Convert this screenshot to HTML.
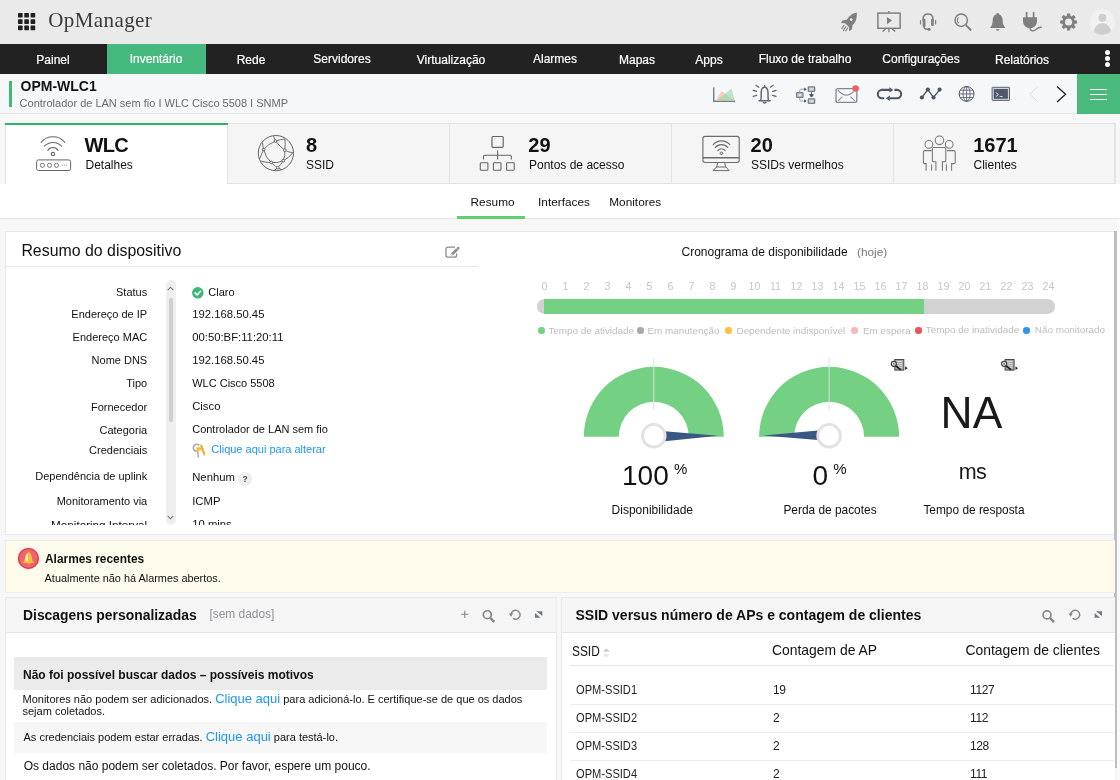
<!DOCTYPE html>
<html>
<head>
<meta charset="utf-8">
<title>OpManager</title>
<style>
*{box-sizing:border-box;margin:0;padding:0}
html,body{width:1120px;height:780px;overflow:hidden;background:#f7f7f7;font-family:"Liberation Sans",sans-serif;color:#000}
#w{position:absolute;left:0;top:0;width:1120px;height:780px;will-change:transform}
.a{position:absolute}
.t{position:absolute;white-space:nowrap;line-height:1}
svg{overflow:visible}
</style>
</head>
<body>
<div id="w">
<div class="a" style="left:0px;top:0px;width:1120px;height:44px;background:#eaeaea;"></div>
<svg class="a" style="left:17.5px;top:13.3px;" width="18" height="18" viewBox="0 0 18 18"><g fill="#1f1f1f"><rect x="0.0" y="0.0" width="4.6" height="4.6" rx="0.6"/><rect x="6.3" y="0.0" width="4.6" height="4.6" rx="0.6"/><rect x="12.6" y="0.0" width="4.6" height="4.6" rx="0.6"/><rect x="0.0" y="6.3" width="4.6" height="4.6" rx="0.6"/><rect x="6.3" y="6.3" width="4.6" height="4.6" rx="0.6"/><rect x="12.6" y="6.3" width="4.6" height="4.6" rx="0.6"/><rect x="0.0" y="12.6" width="4.6" height="4.6" rx="0.6"/><rect x="6.3" y="12.6" width="4.6" height="4.6" rx="0.6"/><rect x="12.6" y="12.6" width="4.6" height="4.6" rx="0.6"/></g></svg>
<div class="t" style="top:10px;font-size:21px;color:#3a3a3a;font-family:&quot;Liberation Serif&quot;,serif;letter-spacing:0.42px;left:48.2px;">OpManager</div>
<div class="a" style="left:0px;top:44px;width:1120px;height:30px;background:#222222;"></div>
<div class="a" style="left:107px;top:44px;width:99px;height:30px;background:#46ba7e;"></div>
<div class="t" style="top:54px;font-size:12px;color:#fff;left:53px;transform:translateX(-50%);-webkit-text-stroke:0.2px #fff;">Painel</div>
<div class="t" style="top:53px;font-size:12px;color:#fff;left:156px;transform:translateX(-50%);-webkit-text-stroke:0.2px #fff;">Inventário</div>
<div class="t" style="top:54px;font-size:12px;color:#fff;left:251px;transform:translateX(-50%);-webkit-text-stroke:0.2px #fff;">Rede</div>
<div class="t" style="top:53px;font-size:12px;color:#fff;left:342px;transform:translateX(-50%);-webkit-text-stroke:0.2px #fff;">Servidores</div>
<div class="t" style="top:54px;font-size:12px;color:#fff;left:451px;transform:translateX(-50%);-webkit-text-stroke:0.2px #fff;">Virtualização</div>
<div class="t" style="top:53px;font-size:12px;color:#fff;left:555px;transform:translateX(-50%);-webkit-text-stroke:0.2px #fff;">Alarmes</div>
<div class="t" style="top:54px;font-size:12px;color:#fff;left:637px;transform:translateX(-50%);-webkit-text-stroke:0.2px #fff;">Mapas</div>
<div class="t" style="top:54px;font-size:12px;color:#fff;left:709px;transform:translateX(-50%);-webkit-text-stroke:0.2px #fff;">Apps</div>
<div class="t" style="top:53px;font-size:12px;color:#fff;left:805px;transform:translateX(-50%);-webkit-text-stroke:0.2px #fff;">Fluxo de trabalho</div>
<div class="t" style="top:53px;font-size:12px;color:#fff;left:921px;transform:translateX(-50%);-webkit-text-stroke:0.2px #fff;">Configurações</div>
<div class="t" style="top:54px;font-size:12px;color:#fff;left:1022px;transform:translateX(-50%);-webkit-text-stroke:0.2px #fff;">Relatórios</div>
<div class="a" style="left:1104.6px;top:50.3px;width:5px;height:5px;background:#fff;border-radius:50%"></div>
<div class="a" style="left:1104.6px;top:56.3px;width:5px;height:5px;background:#fff;border-radius:50%"></div>
<div class="a" style="left:1104.6px;top:62.3px;width:5px;height:5px;background:#fff;border-radius:50%"></div>
<div class="a" style="left:0px;top:74px;width:1120px;height:39.5px;background:#f6f7f8;border-bottom:1px solid #e3e3e3"></div>
<div class="a" style="left:9px;top:81px;width:2.6px;height:26px;background:#3dba7c;"></div>
<div class="t" style="top:79px;font-size:14px;color:#111;font-weight:700;left:20.5px;">OPM-WLC1</div>
<div class="t" style="top:98px;font-size:11px;color:#6b6b6b;left:19.6px;">Controlador de LAN sem fio I WLC Cisco 5508 I SNMP</div>
<div class="a" style="left:1077px;top:74px;width:43px;height:39.5px;background:#4aba7c;"></div>
<div class="a" style="left:1089.6px;top:88.7px;width:17.8px;height:1.3px;background:#fff;"></div>
<div class="a" style="left:1089.6px;top:93.60000000000001px;width:17.8px;height:1.3px;background:#fff;"></div>
<div class="a" style="left:1089.6px;top:98.5px;width:17.8px;height:1.3px;background:#fff;"></div>
<div class="a" style="left:0px;top:113.5px;width:1120px;height:10px;background:#f8f8f8;"></div>
<div class="a" style="left:5px;top:123px;width:1111px;height:60.5px;background:#f5f5f5;border:1px solid #e3e3e3;border-right:2px solid #e4e4e4"></div>
<div class="a" style="left:448.5px;top:123px;width:1px;height:60px;background:#e3e3e3;"></div>
<div class="a" style="left:670.5px;top:123px;width:1px;height:60px;background:#e3e3e3;"></div>
<div class="a" style="left:892.5px;top:123px;width:1px;height:60px;background:#e3e3e3;"></div>
<div class="a" style="left:5px;top:123px;width:222.5px;height:61px;background:#fff;border-left:1px solid #e6e6e6;border-right:1px solid #e3e3e3"></div>
<div class="a" style="left:5px;top:122.7px;width:222.5px;height:2.6px;background:#2fb567;"></div>
<div class="t" style="top:135px;font-size:20px;color:#111;font-weight:700;letter-spacing:-0.7px;left:84.6px;">WLC</div>
<div class="t" style="top:159px;font-size:12px;color:#111;left:85.5px;">Detalhes</div>
<div class="t" style="top:135px;font-size:20px;color:#111;font-weight:700;letter-spacing:0px;left:306px;">8</div>
<div class="t" style="top:159px;font-size:12px;color:#111;left:306px;">SSID</div>
<div class="t" style="top:135px;font-size:20px;color:#111;font-weight:700;letter-spacing:0px;left:528.3px;">29</div>
<div class="t" style="top:159px;font-size:12px;color:#111;left:529px;">Pontos de acesso</div>
<div class="t" style="top:135px;font-size:20px;color:#111;font-weight:700;letter-spacing:0px;left:750.6px;">20</div>
<div class="t" style="top:159px;font-size:12px;color:#111;left:751px;">SSIDs vermelhos</div>
<div class="t" style="top:135px;font-size:20px;color:#111;font-weight:700;letter-spacing:0px;left:973.2px;">1671</div>
<div class="t" style="top:159px;font-size:12px;color:#111;left:973.5px;">Clientes</div>
<div class="a" style="left:0px;top:183.5px;width:1120px;height:35px;background:#fff;border-bottom:1px solid #e9e9e9"></div>
<div class="t" style="top:197px;font-size:11.8px;color:#111;left:470.6px;">Resumo</div>
<div class="t" style="top:197px;font-size:11.8px;color:#111;left:538.1px;">Interfaces</div>
<div class="t" style="top:197px;font-size:11.8px;color:#111;left:609.3px;">Monitores</div>
<div class="a" style="left:457px;top:216.4px;width:68.3px;height:2.6px;background:#5fcf72;"></div>
<div class="a" style="left:0px;top:219px;width:1120px;height:561px;background:#f7f7f7;"></div>
<div class="a" style="left:5px;top:231px;width:1109.5px;height:304px;background:#fff;border:1px solid #e9e9e9;border-right:none"></div>
<div class="a" style="left:1114.2px;top:231px;width:2.9px;height:537px;background:#bebebe;"></div>
<div class="a" style="left:1117.1px;top:219px;width:3px;height:561px;background:#fafafa;"></div>
<div class="t" style="top:243px;font-size:15.9px;color:#111;left:21.4px;">Resumo do dispositivo</div>
<div class="a" style="left:5px;top:266px;width:473px;height:1px;background:#e6e6e6;"></div>
<div class="a" style="left:5px;top:267px;width:473px;height:257.6px;overflow:hidden">
<div class="t" style="top:20px;font-size:11px;color:#111;right:330.8px;">Status</div>
<div class="t" style="top:42px;font-size:11px;color:#111;right:330.8px;">Endereço de IP</div>
<div class="t" style="top:42px;font-size:11.3px;color:#111;left:187.2px;">192.168.50.45</div>
<div class="t" style="top:65px;font-size:11px;color:#111;right:330.8px;">Endereço MAC</div>
<div class="t" style="top:65px;font-size:11.3px;color:#111;left:187.2px;">00:50:BF:11:20:11</div>
<div class="t" style="top:88px;font-size:11px;color:#111;right:330.8px;">Nome DNS</div>
<div class="t" style="top:88px;font-size:11.3px;color:#111;left:187.2px;">192.168.50.45</div>
<div class="t" style="top:111px;font-size:11px;color:#111;right:330.8px;">Tipo</div>
<div class="t" style="top:111px;font-size:11px;color:#111;left:187.2px;">WLC Cisco 5508</div>
<div class="t" style="top:135px;font-size:11px;color:#111;right:330.8px;">Fornecedor</div>
<div class="t" style="top:134px;font-size:11.3px;color:#111;left:187.2px;">Cisco</div>
<div class="t" style="top:158px;font-size:11px;color:#111;right:330.8px;">Categoria</div>
<div class="t" style="top:157px;font-size:11px;color:#111;left:187.2px;">Controlador de LAN sem fio</div>
<div class="t" style="top:178px;font-size:11px;color:#111;right:330.8px;">Credenciais</div>
<div class="t" style="top:204px;font-size:11px;color:#111;right:330.8px;">Dependência de uplink</div>
<div class="t" style="top:205px;font-size:11.3px;color:#111;left:187.2px;">Nenhum</div>
<div class="t" style="top:229px;font-size:11px;color:#111;right:330.8px;">Monitoramento via</div>
<div class="t" style="top:229px;font-size:11.3px;color:#111;left:187.2px;">ICMP</div>
<div class="t" style="top:252px;font-size:11.7px;color:#111;right:330.8px;">Monitoring Interval</div>
<div class="t" style="top:252px;font-size:11.3px;color:#111;left:187.2px;">10 mins</div>
<div class="t" style="top:20px;font-size:11px;color:#111;left:203.3px;">Claro</div>
<div class="t" style="top:177px;font-size:11px;color:#1e96f2;left:206.3px;">Clique aqui para alterar</div>
</div>
<svg class="a" style="left:192px;top:287.1px;" width="11.6" height="11.6" viewBox="0 0 11.6 11.6"><circle cx="5.8" cy="5.8" r="5.8" fill="#3cb878"/><path d="M3.1 5.9 L5.1 7.9 L8.6 4.2" fill="none" stroke="#fff" stroke-width="1.5" stroke-linecap="round" stroke-linejoin="round"/></svg>
<div class="a" style="left:238.2px;top:472.2px;width:13.6px;height:13.6px;background:#eeeeee;border-radius:50%"></div>
<div class="t" style="top:475px;font-size:8.5px;color:#4a4a4a;font-weight:700;left:245px;transform:translateX(-50%);">?</div>
<div class="a" style="left:165.8px;top:280px;width:10px;height:244.5px;background:#efefef;border-radius:5px"></div>
<div class="a" style="left:168.9px;top:297.8px;width:3.8px;height:124.5px;background:#cfcfcf;border-radius:2px"></div>
<svg class="a" style="left:167.3px;top:285.5px;" width="7" height="5" viewBox="0 0 7 5"><path d="M0.7 4.2 L3.5 1.2 L6.3 4.2" fill="none" stroke="#777" stroke-width="1.1"/></svg>
<svg class="a" style="left:167.3px;top:514.6px;" width="7" height="5" viewBox="0 0 7 5"><path d="M0.7 0.8 L3.5 3.8 L6.3 0.8" fill="none" stroke="#777" stroke-width="1.1"/></svg>
<div class="t" style="top:246px;font-size:12px;color:#111;left:681.5px;">Cronograma de disponibilidade</div>
<div class="t" style="top:247px;font-size:11.8px;color:#777;left:857px;">(hoje)</div>
<div class="t" style="top:281px;font-size:10.6px;color:#c6c6c6;left:544.4px;transform:translateX(-50%);">0</div>
<div class="t" style="top:281px;font-size:10.6px;color:#c6c6c6;left:565.4px;transform:translateX(-50%);">1</div>
<div class="t" style="top:281px;font-size:10.6px;color:#c6c6c6;left:586.4px;transform:translateX(-50%);">2</div>
<div class="t" style="top:281px;font-size:10.6px;color:#c6c6c6;left:607.4px;transform:translateX(-50%);">3</div>
<div class="t" style="top:281px;font-size:10.6px;color:#c6c6c6;left:628.4px;transform:translateX(-50%);">4</div>
<div class="t" style="top:281px;font-size:10.6px;color:#c6c6c6;left:649.4px;transform:translateX(-50%);">5</div>
<div class="t" style="top:281px;font-size:10.6px;color:#c6c6c6;left:670.4px;transform:translateX(-50%);">6</div>
<div class="t" style="top:281px;font-size:10.6px;color:#c6c6c6;left:691.4px;transform:translateX(-50%);">7</div>
<div class="t" style="top:281px;font-size:10.6px;color:#c6c6c6;left:712.4px;transform:translateX(-50%);">8</div>
<div class="t" style="top:281px;font-size:10.6px;color:#c6c6c6;left:733.4px;transform:translateX(-50%);">9</div>
<div class="t" style="top:281px;font-size:10.6px;color:#c6c6c6;left:754.4px;transform:translateX(-50%);">10</div>
<div class="t" style="top:281px;font-size:10.6px;color:#c6c6c6;left:775.4px;transform:translateX(-50%);">11</div>
<div class="t" style="top:281px;font-size:10.6px;color:#c6c6c6;left:796.4px;transform:translateX(-50%);">12</div>
<div class="t" style="top:281px;font-size:10.6px;color:#c6c6c6;left:817.4px;transform:translateX(-50%);">13</div>
<div class="t" style="top:281px;font-size:10.6px;color:#c6c6c6;left:838.4px;transform:translateX(-50%);">14</div>
<div class="t" style="top:281px;font-size:10.6px;color:#c6c6c6;left:859.4px;transform:translateX(-50%);">15</div>
<div class="t" style="top:281px;font-size:10.6px;color:#c6c6c6;left:880.4px;transform:translateX(-50%);">16</div>
<div class="t" style="top:281px;font-size:10.6px;color:#c6c6c6;left:901.4px;transform:translateX(-50%);">17</div>
<div class="t" style="top:281px;font-size:10.6px;color:#c6c6c6;left:922.4px;transform:translateX(-50%);">18</div>
<div class="t" style="top:281px;font-size:10.6px;color:#c6c6c6;left:943.4px;transform:translateX(-50%);">19</div>
<div class="t" style="top:281px;font-size:10.6px;color:#c6c6c6;left:964.4px;transform:translateX(-50%);">20</div>
<div class="t" style="top:281px;font-size:10.6px;color:#c6c6c6;left:985.4px;transform:translateX(-50%);">21</div>
<div class="t" style="top:281px;font-size:10.6px;color:#c6c6c6;left:1006.4px;transform:translateX(-50%);">22</div>
<div class="t" style="top:281px;font-size:10.6px;color:#c6c6c6;left:1027.4px;transform:translateX(-50%);">23</div>
<div class="t" style="top:281px;font-size:10.6px;color:#c6c6c6;left:1048.4px;transform:translateX(-50%);">24</div>
<div class="a" style="left:537.4px;top:299px;width:518px;height:14.7px;background:#d2d2d4;border-radius:7.3px"></div>
<div class="a" style="left:544.3px;top:299px;width:379.6px;height:14.7px;background:#74d184;"></div>
<div class="a" style="left:538.1px;top:327.3px;width:6.6px;height:6.6px;background:#74d184;border-radius:50%"></div>
<div class="t" style="top:326px;font-size:9.9px;color:#bdbdbd;left:548.4px;">Tempo de atividade</div>
<div class="a" style="left:637.2px;top:327.3px;width:6.6px;height:6.6px;background:#a9a9a9;border-radius:50%"></div>
<div class="t" style="top:326px;font-size:9.9px;color:#bdbdbd;left:647.5px;">Em manutenção</div>
<div class="a" style="left:725.1px;top:327.3px;width:6.6px;height:6.6px;background:#f7c33c;border-radius:50%"></div>
<div class="t" style="top:326px;font-size:9.9px;color:#bdbdbd;left:736.5px;">Dependente indisponível</div>
<div class="a" style="left:851.0px;top:327.3px;width:6.6px;height:6.6px;background:#f9b8b8;border-radius:50%"></div>
<div class="t" style="top:326px;font-size:9.9px;color:#bdbdbd;left:862.9px;">Em espera</div>
<div class="a" style="left:915.3000000000001px;top:327.3px;width:6.6px;height:6.6px;background:#e8545b;border-radius:50%"></div>
<div class="t" style="top:325px;font-size:9.9px;color:#bdbdbd;left:925.8px;">Tempo de inatividade</div>
<div class="a" style="left:1023.0px;top:327.3px;width:6.6px;height:6.6px;background:#2d95f0;border-radius:50%"></div>
<div class="t" style="top:325px;font-size:9.9px;color:#bdbdbd;left:1034.8px;">Não monitorado</div>
<svg class="a" style="left:0px;top:0px;" width="1120" height="780" viewBox="0 0 1120 780"><path d="M583.8 436.8 A70 70 0 0 1 723.8 436.8 L688.8 436.8 A35 35 0 0 0 618.8 436.8 Z" fill="#74d184"/><line x1="653.8" y1="358.4" x2="653.8" y2="410.3" stroke="#e2e2e2" stroke-width="1"/><path d="M664.8 431.2 L718.1999999999999 435.8 L664.8 441.2 Z" fill="#3b5784"/><circle cx="653.8" cy="435.7" r="11.3" fill="#fff" stroke="#e2e2e2" stroke-width="2.9"/></svg>
<svg class="a" style="left:0px;top:0px;" width="1120" height="780" viewBox="0 0 1120 780"><path d="M759.1 436.8 A70 70 0 0 1 899.1 436.8 L864.1 436.8 A35 35 0 0 0 794.1 436.8 Z" fill="#74d184"/><line x1="829.1" y1="358.4" x2="829.1" y2="410.3" stroke="#e2e2e2" stroke-width="1"/><path d="M818.1 430.6 L763.3000000000001 435.4 L818.1 440 Z" fill="#3b5784"/><circle cx="829.1" cy="435.7" r="11.3" fill="#fff" stroke="#e2e2e2" stroke-width="2.9"/></svg>
<div class="t" style="top:462px;font-size:28px;color:#111;left:622px;">100</div>
<div class="t" style="top:461px;font-size:15px;color:#111;left:674px;">%</div>
<div class="t" style="top:462px;font-size:28px;color:#111;left:812.4px;">0</div>
<div class="t" style="top:461px;font-size:15px;color:#111;left:833.3px;">%</div>
<div class="t" style="top:504px;font-size:12px;color:#111;left:611.6px;">Disponibilidade</div>
<div class="t" style="top:505px;font-size:11.9px;color:#111;left:783.4px;">Perda de pacotes</div>
<div class="t" style="top:505px;font-size:11.9px;color:#111;left:923.4px;">Tempo de resposta</div>
<div class="t" style="top:391px;font-size:44.4px;color:#1a1a1a;left:940.6px;">NA</div>
<div class="t" style="top:462px;font-size:21.5px;color:#1a1a1a;letter-spacing:-0.8px;left:958.8px;">ms</div>
<div class="a" style="left:5px;top:539.6px;width:1109.5px;height:53.4px;background:#fefaec;border:1px solid #f0ede2;border-right:none"></div>
<div class="a" style="left:17.8px;top:547.8px;width:21px;height:21px;background:#f0525a;border-radius:50%;border:1.5px solid #f58a8f"></div>
<div class="t" style="top:554px;font-size:11.9px;color:#111;font-weight:700;left:45px;">Alarmes recentes</div>
<div class="t" style="top:573px;font-size:10.9px;color:#111;left:44.6px;">Atualmente não há Alarmes abertos.</div>
<div class="a" style="left:5px;top:597px;width:551.5px;height:190px;background:#fff;border:1px solid #e9e9e9"></div>
<div class="a" style="left:6px;top:598px;width:549.5px;height:35px;background:#f5f5f5;border-bottom:1px solid #e6e6e6"></div>
<div class="t" style="top:609px;font-size:13.9px;color:#111;font-weight:700;left:23px;">Discagens personalizadas</div>
<div class="t" style="top:609px;font-size:11.9px;color:#8e9196;left:209.5px;">[sem dados]</div>
<div class="a" style="left:14px;top:657px;width:533px;height:33px;background:#ebebeb;"></div>
<div class="t" style="top:669px;font-size:12px;color:#111;font-weight:700;left:23px;">Não foi possível buscar dados – possíveis motivos</div>
<div class="a" style="left:14px;top:690px;width:533px;height:32px;background:#fff;"></div>
<div class="a" style="left:14px;top:722px;width:533px;height:31px;background:#f7f7f7;"></div>
<div class="a" style="left:14px;top:753px;width:533px;height:30px;background:#fff;"></div>
<div class="t" style="top:694px;font-size:11px;color:#111;left:22.5px;">Monitores não podem ser adicionados. <span style="font-size:13px;line-height:0;color:#1e96f2">Clique aqui</span> para adicioná-lo. E certifique-se de que os dados</div>
<div class="t" style="top:706px;font-size:11px;color:#111;left:22.5px;">sejam coletados.</div>
<div class="t" style="top:732px;font-size:11px;color:#111;left:23.5px;">As credenciais podem estar erradas. <span style="font-size:13px;line-height:0;color:#1e96f2">Clique aqui</span> para testá-lo.</div>
<div class="t" style="top:760px;font-size:12px;color:#111;left:23.7px;">Os dados não podem ser coletados. Por favor, espere um pouco.</div>
<div class="a" style="left:561px;top:597px;width:553.5px;height:190px;background:#fff;border:1px solid #e9e9e9;border-right:none"></div>
<div class="a" style="left:562px;top:598px;width:552.5px;height:35px;background:#f5f5f5;border-bottom:1px solid #e6e6e6"></div>
<div class="t" style="top:608px;font-size:14px;color:#111;font-weight:700;left:575.5px;">SSID versus número de APs e contagem de clientes</div>
<div class="t" style="top:644px;font-size:14px;color:#111;left:571.6px;transform:scaleX(0.85);transform-origin:0 0;">SSID</div>
<div class="t" style="top:644px;font-size:13.9px;color:#111;left:772px;">Contagem de AP</div>
<div class="t" style="top:644px;font-size:13.9px;color:#111;left:965.5px;">Contagem de clientes</div>
<div class="a" style="left:570px;top:664.6px;width:544px;height:1.2px;background:#e6e6e6;"></div>
<div class="t" style="top:684px;font-size:12px;color:#222;left:575.5px;transform:scaleX(0.925);transform-origin:0 0;">OPM-SSID1</div>
<div class="t" style="top:684px;font-size:12px;color:#222;letter-spacing:-0.4px;left:773px;">19</div>
<div class="t" style="top:684px;font-size:12px;color:#222;letter-spacing:-0.4px;left:970px;">1127</div>
<div class="a" style="left:570px;top:704px;width:544px;height:1px;background:#ececec;"></div>
<div class="t" style="top:712px;font-size:12px;color:#222;left:575.5px;transform:scaleX(0.925);transform-origin:0 0;">OPM-SSID2</div>
<div class="t" style="top:712px;font-size:12px;color:#222;letter-spacing:-0.4px;left:773px;">2</div>
<div class="t" style="top:712px;font-size:12px;color:#222;letter-spacing:-0.4px;left:970px;">112</div>
<div class="a" style="left:570px;top:732px;width:544px;height:1px;background:#ececec;"></div>
<div class="t" style="top:740px;font-size:12px;color:#222;left:575.5px;transform:scaleX(0.925);transform-origin:0 0;">OPM-SSID3</div>
<div class="t" style="top:740px;font-size:12px;color:#222;letter-spacing:-0.4px;left:773px;">2</div>
<div class="t" style="top:740px;font-size:12px;color:#222;letter-spacing:-0.4px;left:970px;">128</div>
<div class="a" style="left:570px;top:760px;width:544px;height:1px;background:#ececec;"></div>
<div class="t" style="top:768px;font-size:12px;color:#222;left:575.5px;transform:scaleX(0.925);transform-origin:0 0;">OPM-SSID4</div>
<div class="t" style="top:768px;font-size:12px;color:#222;letter-spacing:-0.4px;left:773px;">2</div>
<div class="t" style="top:768px;font-size:12px;color:#222;letter-spacing:-0.4px;left:970px;">111</div>
<svg class="a" style="left:0;top:0" width="1120" height="780" viewBox="0 0 1120 780"><path d="M856.8 12.5 C852.8 13 849.4 15.6 847 19.6 L842.6 20.4 L840.9 23.1 L845.2 23.3 L848.9 27 L849.1 31.3 L851.8 29.6 L852.6 25.2 C856 22.6 857.2 17 856.8 12.5 Z" fill="#7f7f7f" /><circle cx="851.2" cy="19.6" r="1.4" fill="#ededed" /><path d="M843.9 25.2 L841.8 28.6 M845.7 26.8 L843.4 30.6 M847.5 28.2 L845.8 31" fill="none" stroke="#7f7f7f" stroke-width="1.1" stroke-linecap="round"/><rect x="877.9" y="13.1" width="22.2" height="15.2" rx="0" fill="none" stroke="#7f7f7f" stroke-width="1.5" /><path d="M888.9 10.9 V13 M888.9 28.6 V32.3 M885.6 29 L882.6 31.6 M892.2 29 L895.2 31.6" fill="none" stroke="#7f7f7f" stroke-width="1.3" /><path d="M887 17 L892 20.6 L887 24.2 Z" fill="#7f7f7f" /><path d="M923.1 20.4 V19 C923.1 15.5 925.2 14 928 14 C930.8 14 932.9 15.5 932.9 19 V20.4" fill="none" stroke="#7f7f7f" stroke-width="1.6" /><rect x="922.7" y="18.8" width="2.7" height="8.2" rx="1" fill="#7f7f7f" /><rect x="931.1" y="18.8" width="2.7" height="7.2" rx="1" fill="#7f7f7f" /><path d="M924 26 V27 C924 28.9 925.4 29.35 928.4 29.35" fill="none" stroke="#7f7f7f" stroke-width="1.5" /><circle cx="929.1" cy="29.35" r="1.55" fill="#7f7f7f" /><path d="M920.5 20.5 V24 M935.6 20.5 V24" fill="none" stroke="#7f7f7f" stroke-width="1.2" stroke-linecap="round"/><circle cx="961.2" cy="20.2" r="6.2" fill="none" stroke="#7f7f7f" stroke-width="1.5" /><path d="M958.6 17.4 A3.6 3.6 0 0 0 958.9 23.2" fill="none" stroke="#7f7f7f" stroke-width="1.05" /><path d="M965.8 25 L971.2 30.5" fill="none" stroke="#7f7f7f" stroke-width="1.8" /><path d="M997.7 12.9 C998.5 12.9 999 13.5 999 14.3 C1001.6 15.2 1002.6 17.6 1002.7 20.6 C1002.8 24 1003.4 25.8 1005 27.3 V28.1 H990.4 V27.3 C992 25.8 992.6 24 992.7 20.6 C992.8 17.6 993.8 15.2 996.4 14.3 C996.4 13.5 996.9 12.9 997.7 12.9 Z" fill="#7f7f7f" /><path d="M996 29.2 H999.4 A1.7 1.5 0 0 1 996 29.2 Z" fill="#7f7f7f" /><path d="M1026.6 12.5 V18 M1033.6 12.5 V18" fill="none" stroke="#7f7f7f" stroke-width="1.7" stroke-linecap="round"/><path d="M1023 17.3 H1037 V21.2 A7 7 0 0 1 1023 21.2 Z" fill="#7f7f7f" /><path d="M1030 27.5 C1030 31.6 1033.6 31.4 1036 29.4 C1038 27.7 1039.8 26.9 1041.8 27.4" fill="none" stroke="#7f7f7f" stroke-width="1.3" /><path d="M1074.62 20.14 L1077.08 20.55 L1077.08 23.45 L1074.62 23.86 L1074.17 24.94 L1075.62 26.96 L1073.56 29.02 L1071.54 27.57 L1070.46 28.02 L1070.05 30.48 L1067.15 30.48 L1066.74 28.02 L1065.66 27.57 L1063.64 29.02 L1061.58 26.96 L1063.03 24.94 L1062.58 23.86 L1060.12 23.45 L1060.12 20.55 L1062.58 20.14 L1063.03 19.06 L1061.58 17.04 L1063.64 14.98 L1065.66 16.43 L1066.74 15.98 L1067.15 13.52 L1070.05 13.52 L1070.46 15.98 L1071.54 16.43 L1073.56 14.98 L1075.62 17.04 L1074.17 19.06 Z M1072.1999999999998 22 A3.6 3.6 0 1 0 1065.0 22 A3.6 3.6 0 1 0 1072.1999999999998 22 Z" fill="#7f7f7f" fill-rule="evenodd"/><clipPath id="av"><circle cx="1102.2" cy="21.9" r="12.75"/></clipPath><circle cx="1102.2" cy="21.9" r="12.75" fill="#f1f1f1" /><circle cx="1102.4" cy="17.7" r="3.95" fill="#cecece" /><ellipse cx="1102.4" cy="33.4" rx="8.9" ry="10.4" fill="#cecece" clip-path="url(#av)"/><path d="M713.7 87.6 V101.2 H735" fill="none" stroke="#767c88" stroke-width="1.4" /><path d="M716 100.5 L721.4 91 L734.6 100.5 Z" fill="#fdbcb0" fill-opacity="0.75"/><path d="M716.6 100.5 L731.4 88.4 L734.9 100.5 Z" fill="#8fdca6" fill-opacity="0.6"/><path d="M764.6 85.6 V87 M759 100.8 H770.2 M760.6 100.6 C761.6 98.6 761 95.4 761.2 92.4 C761.4 89 762.8 87.2 764.6 87.2 C766.4 87.2 767.8 89 768 92.4 C768.2 95.4 767.6 98.6 768.6 100.6 M763.4 102.4 Q764.6 103.6 765.8 102.4" fill="none" stroke="#5f6673" stroke-width="1.45" stroke-linecap="round"/><path d="M756 85.3 L758.8 87.2 M753.2 90.3 L756.6 91.3 M753.2 96.3 L756.6 95.3 M773.2 85.3 L770.4 87.2 M776 90.3 L772.6 91.3 M776 96.3 L772.6 95.3" fill="none" stroke="#5f6673" stroke-width="1.3" stroke-linecap="round"/><rect x="796.6" y="92.7" width="6.4" height="4.6" rx="0.6" fill="#bfc4cd" stroke="#78808f" stroke-width="1.25" /><rect x="798.6" y="94.0" width="2.4" height="2" rx="0" fill="#e4e6ea" /><rect x="808.3" y="86.8" width="6.4" height="4.6" rx="0.6" fill="#bfc4cd" stroke="#78808f" stroke-width="1.25" /><rect x="810.3" y="88.1" width="2.4" height="2" rx="0" fill="#e4e6ea" /><rect x="808.3" y="98.8" width="6.4" height="4.6" rx="0.6" fill="#bfc4cd" stroke="#78808f" stroke-width="1.25" /><rect x="810.3" y="100.1" width="2.4" height="2" rx="0" fill="#e4e6ea" /><path d="M799.8 92.4 V90.2 Q799.8 89.2 800.8 89.2 H804.6 M799.8 97.6 V100 Q799.8 101 800.8 101 H804.6" fill="none" stroke="#9aa1ad" stroke-width="1" /><path d="M804.2 87.4 L806.8 89.2 L804.2 91 Z M804.2 99.2 L806.8 101 L804.2 102.8 Z" fill="#4a4f5a" /><path d="M811.5 92.2 V95 M809.6 94.6 H813.4 L811.5 97.2 Z" fill="#4a4f5a" stroke="#4a4f5a" stroke-width="0.9" /><rect x="836" y="88.6" width="20.8" height="13.8" rx="2" fill="none" stroke="#7f8794" stroke-width="1.3" /><path d="M837.8 89.8 Q846.4 100.4 855 89.8 M838 100.8 L842.4 96.6 M854.8 100.8 L850.4 96.6" fill="none" stroke="#8a919d" stroke-width="1.1" /><circle cx="855.6" cy="88.6" r="3.3" fill="#e9606e" /><path d="M852.6 90 A3.4 3.4 0 0 0 856.4 92" fill="none" stroke="#f2c84b" stroke-width="0.7" /><path d="M884.2 98.3 H882 A4.2 4.2 0 0 1 882 89.9 H890 M894.4 89.9 H897 A4.2 4.2 0 0 1 897 98.3 H889.4" fill="none" stroke="#4b5566" stroke-width="2.1" /><path d="M889.4 87.2 L893.3 89.9 L889.4 92.6 Z M889.8 95.6 L885.9 98.3 L889.8 101 Z" fill="#4b5566" /><path d="M921.9 97.5 L927.8 89.6 L933.5 97.5 L939.6 89.6" fill="none" stroke="#4b5566" stroke-width="1.3" /><circle cx="921.9" cy="97.5" r="2.1" fill="#4b5566" /><circle cx="927.8" cy="89.6" r="2.1" fill="#4b5566" /><circle cx="933.5" cy="97.5" r="2.1" fill="#4b5566" /><circle cx="939.6" cy="89.6" r="2.1" fill="#4b5566" /><circle cx="966.6" cy="93.9" r="7.4" fill="none" stroke="#4b5566" stroke-width="1" /><ellipse cx="966.6" cy="93.9" rx="3.5" ry="7.4" fill="none" stroke="#4b5566" stroke-width="0.8"/><path d="M966.6 86.5 V101.3 M959.2 93.9 H974 M960.4 90.2 H972.8 M960.4 97.6 H972.8" fill="none" stroke="#4b5566" stroke-width="0.8" /><rect x="992.1" y="87.3" width="17.4" height="13.1" rx="0.5" fill="#d0d4da" stroke="#5a6372" stroke-width="1" /><rect x="993.8" y="89" width="14.1" height="9.8" rx="0" fill="#4f5969" /><path d="M995.9 92.6 L998.4 94.6 L995.9 96.6" fill="none" stroke="#dde0e5" stroke-width="1" /><path d="M999.6 96.5 H1002.8" fill="none" stroke="#dde0e5" stroke-width="0.9" /><path d="M1037.9 86.5 L1029.8 94.3 L1037.9 101.9" fill="none" stroke="#d9d9d9" stroke-width="0.9" /><path d="M1057 86.5 L1065.6 94.3 L1057 101.9" fill="none" stroke="#222" stroke-width="1.3" /><rect x="36.6" y="159.9" width="34" height="10.6" rx="1.8" fill="none" stroke="#666" stroke-width="1" /><circle cx="42.4" cy="165.3" r="2.05" fill="none" stroke="#666" stroke-width="0.9" /><circle cx="49.5" cy="165.3" r="2.05" fill="none" stroke="#666" stroke-width="0.9" /><circle cx="56.5" cy="165.3" r="2.05" fill="none" stroke="#666" stroke-width="0.9" /><rect x="61.800000000000004" y="164.4" width="0.9" height="1.6" rx="0" fill="#b5b5b5" /><rect x="64.0" y="164.4" width="0.9" height="1.6" rx="0" fill="#b5b5b5" /><rect x="66.19999999999999" y="164.4" width="0.9" height="1.6" rx="0" fill="#b5b5b5" /><circle cx="52.9" cy="154.1" r="1.7" fill="none" stroke="#666" stroke-width="1.1" /><path d="M47.8 150.5 A5.9 5.9 0 0 1 58.1 150.5 M44.4 146.2 A11.7 11.7 0 0 1 61.6 146.2 M41.1 142.4 A15.4 15.4 0 0 1 64.8 142.4" fill="none" stroke="#666" stroke-width="1.05" stroke-linecap="round"/><circle cx="275.9" cy="153.1" r="17.6" fill="none" stroke="#5a5a5a" stroke-width="0.95" /><path d="M275.5 141.1 Q268 144 263.6 149.5 M275.5 141.1 Q280.5 147 284.7 150.2 M263.6 149.5 Q265.5 157.5 271.2 162.5 M284.7 150.2 Q285.5 155.5 283.3 160.7 M283.3 160.7 Q278 163.4 271.2 162.5 M271.2 162.5 Q274 165.6 277.7 167.7 M283.3 160.7 Q280.8 164.6 277.7 167.7 M275.5 141.1 L273.4 136.2 M275.5 141.1 Q280.5 139.4 284.9 138.9 M284.9 138.9 Q285.6 144.6 284.7 150.2 M284.7 150.2 Q289 152.4 292.9 152.7 M292.9 152.7 Q288.6 158.2 283.3 160.7 M263.6 149.5 L262.3 142.6 M263.6 149.5 Q261.4 154.6 259.7 158.9 M271.2 162.5 Q265.6 162.6 260.9 161 M277.7 167.7 L274.2 170.4 M277.7 167.7 L281.6 169.7" fill="none" stroke="#5a5a5a" stroke-width="0.85" /><circle cx="275.5" cy="141.1" r="1.35" fill="#f5f5f5" stroke="#5a5a5a" stroke-width="0.85" /><circle cx="263.6" cy="149.5" r="1.35" fill="#f5f5f5" stroke="#5a5a5a" stroke-width="0.85" /><circle cx="284.7" cy="150.2" r="1.35" fill="#f5f5f5" stroke="#5a5a5a" stroke-width="0.85" /><circle cx="283.3" cy="160.7" r="1.35" fill="#f5f5f5" stroke="#5a5a5a" stroke-width="0.85" /><circle cx="271.2" cy="162.5" r="1.35" fill="#f5f5f5" stroke="#5a5a5a" stroke-width="0.85" /><circle cx="277.7" cy="167.7" r="1.35" fill="#f5f5f5" stroke="#5a5a5a" stroke-width="0.85" /><rect x="492" y="136.5" width="11.2" height="10.8" rx="1" fill="none" stroke="#666" stroke-width="1.2" /><path d="M497.6 150.4 V159.4 M483.5 159.4 V156.2 Q483.5 155.2 484.5 155.2 H510.3 Q511.3 155.2 511.3 156.2 V159.4" fill="none" stroke="#666" stroke-width="1.1" /><rect x="480.3" y="162.8" width="7.6" height="7.5" rx="0.8" fill="none" stroke="#666" stroke-width="1.1" /><rect x="493.4" y="162.8" width="7.6" height="7.5" rx="0.8" fill="none" stroke="#666" stroke-width="1.1" /><rect x="506.6" y="162.8" width="7.6" height="7.5" rx="0.8" fill="none" stroke="#666" stroke-width="1.1" /><rect x="702.9" y="136.3" width="36.3" height="26.2" rx="2.2" fill="none" stroke="#6c6c6c" stroke-width="1.15" /><path d="M703 157.7 H739.2" fill="none" stroke="#6c6c6c" stroke-width="1.4" /><path d="M717.7 162.8 L716.7 166.9 M724.7 162.8 L725.6 166.9 M716 167 H726.4 M716.4 167 L713.2 170.5 M726 167 L729 170.5 M712.8 170.6 H729.3" fill="none" stroke="#6c6c6c" stroke-width="1" /><circle cx="721.4" cy="153.3" r="1.3" fill="none" stroke="#6c6c6c" stroke-width="0.95" /><path d="M717.8 150.6 A4.6 4.6 0 0 1 725.2 150.6 M715.2 147.6 A8.2 8.2 0 0 1 727.8 147.6 M713.1 144.6 A11.4 11.4 0 0 1 729.9 144.6" fill="none" stroke="#6c6c6c" stroke-width="1.1" stroke-linecap="round"/><circle cx="939.5" cy="140.3" r="4.3" fill="none" stroke="#777" stroke-width="1.05" /><circle cx="928.9" cy="144.4" r="3.85" fill="none" stroke="#777" stroke-width="1.05" /><circle cx="949.2" cy="144.4" r="3.85" fill="none" stroke="#777" stroke-width="1.05" /><path d="M935.9 170.7 V161.8 H933.4 Q932.4 161.8 932.4 160.8 V148.6 Q932.4 147.4 933.6 147.4 H944.7 Q945.8 147.4 945.8 148.6 V160.8 Q945.8 161.8 944.8 161.8 H942.4 V170.7" fill="none" stroke="#777" stroke-width="1.05" /><path d="M926.1 170.7 V163.6 H924.6 Q923.4 163.6 923.4 162.4 V152.2 Q923.4 150.6 925 150.6 H931.6 M931.6 164.2 V170.7" fill="none" stroke="#777" stroke-width="1.05" /><path d="M951.6 170.7 V163.6 H954 Q955.2 163.6 955.2 162.4 V152.2 Q955.2 150.6 953.6 150.6 H947 M946.4 164.2 V170.7" fill="none" stroke="#777" stroke-width="1.05" /><path d="M455 247.2 H448 Q446 247.2 446 249.2 V255.2 Q446 257.2 448 257.2 H454.6 Q456.6 257.2 456.6 255.2 V253.6" fill="none" stroke="#8b8b8b" stroke-width="1.3" /><path d="M452 254.2 L458.2 248.2" fill="none" stroke="#8b8b8b" stroke-width="2.6" stroke-linecap="round"/><path d="M455.9 247.6 L458.8 250.5" fill="none" stroke="#fff" stroke-width="0.6" /><circle cx="451.9" cy="254.3" r="0.7" fill="#fff" /><path d="M197.2 451.2 C194.4 451.6 192.9 449.4 193.5 446.8 C194.2 444.2 197.6 443.5 199.3 445.4" fill="none" stroke="#adadad" stroke-width="1.7" /><path d="M197.6 450.8 L198.4 457.4" fill="none" stroke="#b0b0b0" stroke-width="1.5" /><path d="M200.9 444.6 L204.7 455.4" fill="none" stroke="#f3c233" stroke-width="2.2" /><path d="M201.4 446 L204 453.8" fill="none" stroke="#e8566a" stroke-width="0.9" stroke-dasharray="1 1.2"/><path d="M196.4 447.2 H201.6 V450.6 H199 L198 452 H196.4 Z" fill="#f5c330" /><circle cx="198.2" cy="448.8" r="0.7" fill="#f3a0a8" /><rect x="894.8" y="359.5" width="9" height="10.6" rx="0" fill="#a8a8a8" stroke="#4a4a4a" stroke-width="1" /><path d="M896.4 361.6 H902.2 M896.4 363.6 H902.2 M898 365.6 H902.2 M899 367.6 H902.2" fill="none" stroke="#e6e6e6" stroke-width="0.8" /><circle cx="893.8" cy="363.8" r="2.5" fill="#fff" stroke="#3c3c3c" stroke-width="1.2" /><circle cx="893.8" cy="363.8" r="0.9" fill="#555" /><path d="M895.8 365.8 L900.8 369.8" fill="none" stroke="#1a1a1a" stroke-width="1.6" /><path d="M905.2 366.3 L907.6 368.2 L905.2 370.1 Z" fill="#1a1a1a" /><rect x="1005.0999999999999" y="359.5" width="9" height="10.6" rx="0" fill="#a8a8a8" stroke="#4a4a4a" stroke-width="1" /><path d="M1006.6999999999999 361.6 H1012.5 M1006.6999999999999 363.6 H1012.5 M1008.3 365.6 H1012.5 M1009.3 367.6 H1012.5" fill="none" stroke="#e6e6e6" stroke-width="0.8" /><circle cx="1004.0999999999999" cy="363.8" r="2.5" fill="#fff" stroke="#3c3c3c" stroke-width="1.2" /><circle cx="1004.0999999999999" cy="363.8" r="0.9" fill="#555" /><path d="M1006.0999999999999 365.8 L1011.0999999999999 369.8" fill="none" stroke="#1a1a1a" stroke-width="1.6" /><path d="M1015.5 366.3 L1017.9 368.2 L1015.5 370.1 Z" fill="#1a1a1a" /><circle cx="28.4" cy="558.4" r="9.9" fill="#ec6672" stroke="#f52a3e" stroke-width="1.2" /><path d="M28.6 551.8 C29.2 551.8 29.5 552.4 29.5 553 C31.4 553.8 31.8 556 32 558.4 C32.1 560.2 32.8 561.4 34 562.2 V562.9 H22.9 V562.2 C24.2 561.4 24.8 560.2 24.9 558.4 C25.1 556 25.6 553.8 27.6 553 C27.6 552.4 28 551.8 28.6 551.8 Z" fill="#f5c233" /><path d="M27.9 553.6 C25.9 554.6 25.7 557 25.5 561 H27.9 Z" fill="#f3e2dc" /><path d="M27.2 563.2 H30 Q28.6 565.2 27.2 563.2 Z" fill="#f5c233" /><path d="M461.2 614.3 H468.4 M464.8 610.7 V617.9" fill="none" stroke="#868686" stroke-width="1.1" /><circle cx="487.3" cy="614.7" r="3.95" fill="none" stroke="#868686" stroke-width="1.7" /><path d="M490.40000000000003 618.0 L494.3 621.9000000000001" fill="none" stroke="#868686" stroke-width="2.4" /><path d="M511.1 614.5 A4.5 4.5 0 1 1 513.0 618.4000000000001" fill="none" stroke="#868686" stroke-width="1.4" /><path d="M509.0 613.5 L513.3000000000001 613.3000000000001 L511.0 616.7 Z" fill="#868686" /><path d="M536.4 611.2 H542.4 V616.0 Z" fill="#6f7883" /><path d="M535 613.0 V617.7 H540.4 Z" fill="#6f7883" /><circle cx="1047" cy="614.9" r="3.95" fill="none" stroke="#868686" stroke-width="1.7" /><path d="M1050.1 618.1999999999999 L1054 622.1" fill="none" stroke="#868686" stroke-width="2.4" /><path d="M1070.7 614.5 A4.5 4.5 0 1 1 1072.6000000000001 618.4000000000001" fill="none" stroke="#868686" stroke-width="1.4" /><path d="M1068.6000000000001 613.5 L1072.9 613.3000000000001 L1070.6000000000001 616.7 Z" fill="#868686" /><path d="M1096.0 611.2 H1102.0 V616.0 Z" fill="#6f7883" /><path d="M1094.6 613.0 V617.7 H1100.0 Z" fill="#6f7883" /><path d="M606.3 648.4 L609.7 651.6 H602.9 Z" fill="#c6c6c6" /><path d="M606.3 657.4 L609.7 654 H602.9 Z" fill="#e4e4e4" /></svg>
</div>
</body>
</html>
